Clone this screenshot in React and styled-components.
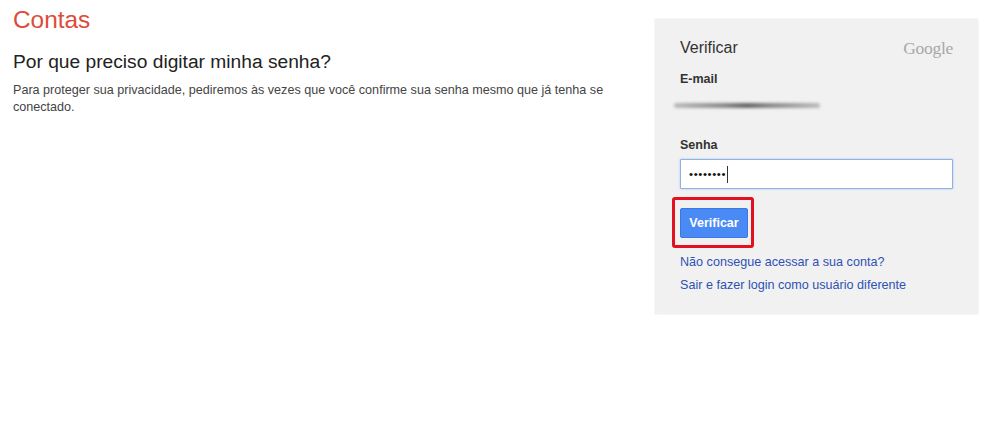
import React from "react";
import styled, { createGlobalStyle } from "styled-components";

const GlobalStyle = createGlobalStyle`
  html, body {
    margin: 0;
    padding: 0;
    background: #fff;
    font-family: "Liberation Sans", Arial, sans-serif;
  }
`;

const Page = styled.div`
  width: 984px;
  height: 422px;
  overflow: hidden;
  display: flex;
  justify-content: space-between;
  align-items: flex-start;
  padding: 7px 6px 0 13px;
  box-sizing: border-box;
`;

const Main = styled.div`
  width: 610px;
`;

const Title = styled.h1`
  margin: 0;
  font-size: 24.4px;
  line-height: 26px;
  font-weight: 400;
  color: #dd4b39;
`;

const Question = styled.h2`
  margin: 18px 0 0;
  font-size: 19.2px;
  line-height: 22px;
  font-weight: 400;
  color: #222;
`;

const Body = styled.p`
  margin: 9px 0 0;
  font-size: 12.6px;
  line-height: 17px;
  color: #444;
`;

const Panel = styled.div`
  width: 323px;
  height: 295px;
  margin-top: 12px;
  box-sizing: border-box;
  padding: 19px 25px 0;
  background: #f1f1f1;
  box-shadow: 0 0 2px rgba(0, 0, 0, 0.1);
`;

const PanelHead = styled.div`
  display: flex;
  justify-content: space-between;
  align-items: center;
  height: 20px;
`;

const PanelTitle = styled.div`
  font-size: 16px;
  color: #333;
`;

const GoogleLogo = styled.div`
  font-family: "Liberation Serif", serif;
  font-size: 17.5px;
  letter-spacing: -0.3px;
  color: #a8a8a8;
`;

const Label = styled.div`
  margin-top: ${(p) => p.$top}px;
  font-size: 12.5px;
  line-height: 14px;
  font-weight: 700;
  color: #333;
`;

const BlurredEmail = styled.div`
  width: 146px;
  height: 5px;
  margin: 17px 0 0 -6px;
  border-radius: 3px;
  background: linear-gradient(90deg, #bbb, #888 35%, #666 50%, #888 65%, #bbb);
  filter: blur(1.8px);
`;

const PasswordInput = styled.div`
  display: flex;
  align-items: center;
  height: 30px;
  margin-top: 7px;
  padding-left: 8px;
  box-sizing: border-box;
  background: #fff;
  border: 1px solid #8fb1e4;
  border-radius: 1px;
  box-shadow: 0 0 2px rgba(77, 144, 254, 0.5);
`;

const Dots = styled.span`
  font-size: 11.5px;
  letter-spacing: 0.6px;
  color: #111;
`;

const Caret = styled.span`
  width: 1px;
  height: 17px;
  margin-left: 1px;
  background: #333;
`;

const Highlight = styled.div`
  display: inline-block;
  margin: 8px 0 0 -8px;
  padding: 8px 3px 7px 5px;
  border: 3px solid #e3101f;
  border-radius: 3px;
`;

const VerifyButton = styled.button`
  display: block;
  width: 68px;
  height: 30px;
  padding: 0;
  border: 1px solid #3b78e7;
  border-radius: 2px;
  background: #4a8af4;
  color: #fff;
  font-family: inherit;
  font-size: 12.5px;
  font-weight: 700;
`;

const LinkList = styled.div`
  display: flex;
  flex-direction: column;
  gap: 7px;
  margin-top: 6px;
`;

const Link = styled.a`
  font-size: 12.6px;
  line-height: 16px;
  color: #2f51b3;
`;

export default function App() {
  return (
    <>
      <GlobalStyle />
      <Page>
        <Main>
          <Title>Contas</Title>
          <Question>Por que preciso digitar minha senha?</Question>
          <Body>
            Para proteger sua privacidade, pediremos às vezes que você confirme sua senha
            mesmo que já tenha se conectado.
          </Body>
        </Main>
        <Panel>
          <PanelHead>
            <PanelTitle>Verificar</PanelTitle>
            <GoogleLogo>Google</GoogleLogo>
          </PanelHead>
          <Label $top={14}>E-mail</Label>
          <BlurredEmail />
          <Label $top={30}>Senha</Label>
          <PasswordInput>
            <Dots>••••••••</Dots>
            <Caret />
          </PasswordInput>
          <Highlight>
            <VerifyButton>Verificar</VerifyButton>
          </Highlight>
          <LinkList>
            <Link>Não consegue acessar a sua conta?</Link>
            <Link>Sair e fazer login como usuário diferente</Link>
          </LinkList>
        </Panel>
      </Page>
    </>
  );
}
